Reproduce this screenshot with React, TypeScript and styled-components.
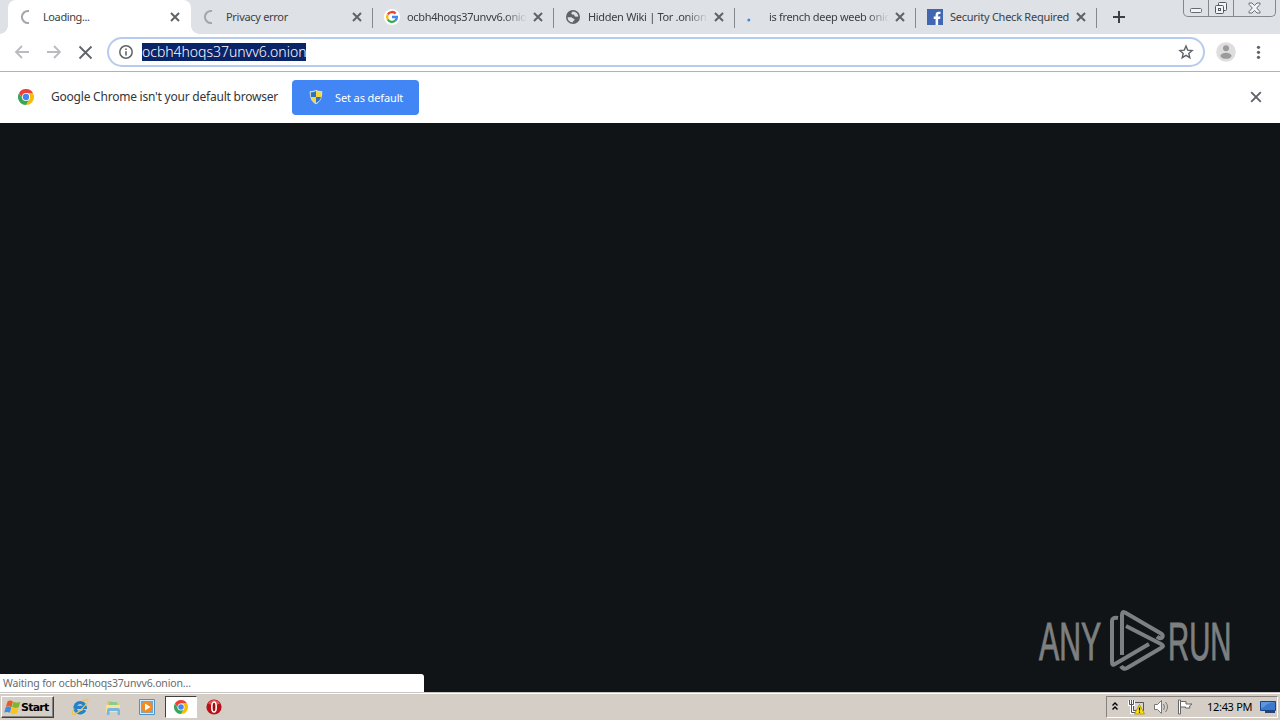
import React from 'react';
import styled, { createGlobalStyle, css } from 'styled-components';

const GlobalStyle = createGlobalStyle`
  * {
    box-sizing: border-box;
  }

  body {
    margin: 0;
    overflow: hidden;
    font-family: 'Noto Sans', 'DejaVu Sans', sans-serif;
  }

  svg {
    display: block;
    flex-shrink: 0;
  }
`;

const Screen = styled.div`
  width: 1280px;
  height: 720px;
  display: flex;
  flex-direction: column;
  background: #101417;
`;

const TabStrip = styled.div`
  height: 34px;
  display: flex;
  padding-left: 8px;
  background: #dee1e6;
  flex-shrink: 0;
`;

const TabItem = styled.div<{ $active?: boolean; $divider?: boolean }>`
  position: relative;
  width: 181px;
  height: 34px;
  padding: 0 10px 0 12px;
  display: flex;
  align-items: center;
  flex-shrink: 0;

  ${({ $divider }) =>
    $divider &&
    css`
      &::after {
        content: '';
        position: absolute;
        right: -1px;
        top: 8px;
        width: 1px;
        height: 20px;
        background: #85888d;
      }
    `}

  ${({ $active }) =>
    $active &&
    css`
      width: 183px;
      padding-right: 11px;
      background: #fff;
      border-radius: 8px 8px 0 0;

      &::before,
      &::after {
        content: '';
        position: absolute;
        bottom: 0;
        width: 8px;
        height: 8px;
      }

      &::before {
        left: -8px;
        background: radial-gradient(circle at 0 0, #dee1e6 7.5px, #fff 8px);
      }

      &::after {
        right: -8px;
        background: radial-gradient(circle at 100% 0, #dee1e6 7.5px, #fff 8px);
      }
    `}
`;

const Favicon = styled.div`
  width: 16px;
  height: 16px;
  margin-right: 7px;
  flex-shrink: 0;
`;

const TabTitle = styled.div<{ $spacing: number; $fade?: boolean }>`
  width: 120px;
  overflow: hidden;
  white-space: nowrap;
  color: #3c4043;
  font-size: 11px;
  line-height: 18px;
  letter-spacing: ${({ $spacing }) => $spacing}px;
  ${({ $fade }) =>
    $fade && 'mask-image: linear-gradient(90deg, #000 98px, transparent 120px);'}
`;

const TabClose = styled.div`
  margin-left: auto;
`;

const NewTab = styled.div`
  padding: 11px 0 0 17px;
`;

const WindowControls = styled.div`
  height: 17px;
  width: 93px;
  margin-left: auto;
  margin-right: 4px;
  display: flex;
  border: 1px solid #84888e;
  border-top: 0;
  border-radius: 0 0 5px 5px;
`;

const WindowButton = styled.div<{ $width: number }>`
  width: ${({ $width }) => $width}px;
  display: flex;
  align-items: center;
  justify-content: center;

  & + & {
    border-left: 1px solid #84888e;
  }
`;

const Toolbar = styled.div`
  height: 38px;
  display: flex;
  align-items: center;
  padding: 0 13px 1px 14px;
  border-bottom: 1px solid #b0b2b4;
  background: #fff;
  flex-shrink: 0;
`;

const NavButton = styled.div`
  width: 16px;
  margin-right: 16px;
`;

const Omnibox = styled.div`
  width: 1098px;
  height: 30px;
  margin-left: -3px;
  padding: 0 9px 0 10px;
  display: flex;
  align-items: center;
  border: 2px solid #b6cbed;
  border-radius: 15px;
  background: #fff;
`;

const Address = styled.div`
  height: 18px;
  margin-left: 9px;
  margin-right: auto;
  white-space: nowrap;
  background: #0a246a;
  color: #fff;
  font-size: 14px;
  font-weight: 300;
  line-height: 17px;
  letter-spacing: -0.02px;
`;

const Avatar = styled.div`
  margin: 0 14px 0 11px;
`;

const InfoBar = styled.div`
  height: 51px;
  padding: 0 18px;
  display: flex;
  align-items: center;
  background: #fff;
  flex-shrink: 0;

  & > svg {
    margin-bottom: 2px;
  }
`;

const InfoText = styled.div`
  width: 241px;
  margin-left: 17px;
  padding-bottom: 2px;
  white-space: nowrap;
  color: #333639;
  font-size: 12px;
  letter-spacing: -0.22px;
`;

const DefaultButton = styled.div`
  width: 127px;
  height: 35px;
  padding-left: 17px;
  padding-bottom: 1px;
  display: flex;
  align-items: center;
  gap: 12px;
  border-radius: 4px;
  background: #4285f4;
  color: #fff;
  font-size: 11px;
  letter-spacing: -0.12px;
  white-space: nowrap;
`;

const InfoClose = styled.div`
  margin-left: auto;
  padding-bottom: 2px;
`;

const Viewport = styled.div`
  position: relative;
  flex: 1;
`;

const StatusBubble = styled.div`
  position: absolute;
  left: 0;
  bottom: 0;
  width: 424px;
  height: 18px;
  padding-left: 3px;
  border-top-right-radius: 3px;
  background: #fff;
  color: #686b6e;
  font-size: 10.5px;
  line-height: 18px;
  letter-spacing: -0.15px;
`;

const Watermark = styled.div`
  position: absolute;
  left: 1036px;
  top: 484px;
`;

const Taskbar = styled.div`
  height: 28px;
  padding: 2px 2px 1px 1px;
  display: flex;
  align-items: center;
  border-top: 1px solid #c7c6c2;
  box-shadow: inset 0 1px #fff;
  background: #d5cec7;
  flex-shrink: 0;
`;

const StartButton = styled.div`
  width: 53px;
  height: 22px;
  padding-left: 2px;
  display: flex;
  align-items: center;
  border: 1px solid;
  border-color: #fff #404040 #404040 #fff;
  box-shadow: inset -1px -1px #85817c;
  color: #000;
  font-family: 'DejaVu Sans', sans-serif;
  font-size: 11px;
  font-weight: 700;
  letter-spacing: -0.75px;
`;

const QuickLaunch = styled.div`
  display: flex;
  align-items: center;
  margin-left: 9px;
`;

const LaunchItem = styled.div<{ $active?: boolean }>`
  width: ${({ $active }) => ($active ? 32 : 33.5)}px;
  height: 22px;
  margin-right: ${({ $active }) => ($active ? 1 : 0)}px;
  display: flex;
  align-items: center;
  justify-content: center;
  ${({ $active }) =>
    $active &&
    css`
      margin-left: 1px;
      border: 1px solid;
      border-color: #404040 #fff #fff #404040;
      background: #fff;
    `}
`;

const Tray = styled.div`
  width: 172px;
  height: 22px;
  margin-left: auto;
  padding: 0 1px 0 4px;
  display: flex;
  align-items: center;
  border: 1px solid;
  border-color: #85817c #fff #fff #85817c;
`;

const TrayItem = styled.div<{ $gap: number }>`
  margin-right: ${({ $gap }) => $gap}px;
`;

const Clock = styled.div`
  width: 46px;
  margin-right: 7px;
  padding-bottom: 1px;
  color: #000;
  font-size: 11px;
  letter-spacing: -0.3px;
  white-space: nowrap;
`;

const CrossIcon = ({ size = 10, stroke = 2, color = '#5f6368' }) => (
  <svg width={size} height={size} viewBox="0 0 10 10">
    <path d="M1 1l8 8M9 1l-8 8" stroke={color} strokeWidth={(stroke * 10) / size} />
  </svg>
);

const SpinnerIcon = () => (
  <svg width="16" height="16" viewBox="0 0 16 16">
    <path
      d="M9 2.1A6 6 0 1 0 9 13.9"
      fill="none"
      stroke="#a3a6ab"
      strokeWidth="2"
    />
  </svg>
);

const GoogleIcon = () => (
  <svg width="16" height="16" viewBox="0 0 16 16">
    <circle cx="8" cy="8" r="8" fill="#fff" />
    <g fill="none" strokeWidth="2.3">
      <path d="M3.8 5.5A4.9 4.9 0 0 1 11.6 4.5" stroke="#ea4335" />
      <path d="M3.8 10.5A4.9 4.9 0 0 1 3.8 5.5" stroke="#fbbc05" />
      <path d="M11.2 11.7A4.9 4.9 0 0 1 3.8 10.5" stroke="#34a853" />
      <path d="M8 8h4.9A4.9 4.9 0 0 1 11.2 11.7" stroke="#4285f4" />
    </g>
  </svg>
);

const GlobeIcon = () => (
  <svg width="16" height="16" viewBox="0 0 16 16">
    <circle cx="8" cy="8" r="7" fill="#5f6368" />
    <path
      d="M8 2.6L6.2 4l.8 1.4 2.2.4.4 1.5 1.4.5 2.400-.4C13 4.800 11 2.700 8 2.600zM2.600 8.200c1.500.2 4-.3 4.800.9.700 1 2.200.4 2.200 1.500 0 1.200-1.500 1-1.800 2.800-3 0-5.200-2.200-5.200-5.200z"
      fill="#dee1e6"
    />
  </svg>
);

const DotIcon = () => (
  <svg width="16" height="16" viewBox="0 0 16 16">
    <circle cx="2.800" cy="11" r="1.500" fill="#3c8be0" />
  </svg>
);

const FacebookIcon = () => (
  <svg width="16" height="16" viewBox="0 0 16 16">
    <path d="M0 0h16v16H0z" fill="#4267b2" />
    <path
      d="M8.6 16V9.9H6.7V7.5h1.9V5.8c0-2 1.2-3.1 3-3.1h1.9v2.2h-1.2c-1 0-1.2.5-1.2 1.2v1.4h2.3l-.3 2.4h-2V16z"
      fill="#fff"
    />
  </svg>
);

const ArrowIcon = ({ forward = false }) => (
  <svg width="16" height="16" viewBox="0 0 16 16">
    <path
      d={forward ? 'M1 8h13M8 2l6 6-6 6' : 'M15 8H2M8 2L2 8l6 6'}
      fill="none"
      stroke="#b9bbbe"
      strokeWidth="1.8"
    />
  </svg>
);

const InfoIcon = () => (
  <svg width="14" height="14" viewBox="0 0 14 14">
    <circle cx="7" cy="7" r="6.2" fill="none" stroke="#5f6368" strokeWidth="1.5" />
    <path d="M7 6.2v4.3M7 3.5V5" stroke="#5f6368" strokeWidth="1.6" />
  </svg>
);

const StarIcon = () => (
  <svg width="16" height="16" viewBox="0 0 16 16">
    <path
      d="M8 2l1.7 4.1 4.4.4-3.3 2.9 1 4.3L8 11.4l-3.8 2.3 1-4.3-3.3-2.9 4.4-.4z"
      fill="none"
      stroke="#5f6368"
      strokeWidth="1.4"
    />
  </svg>
);

const AvatarIcon = () => (
  <svg width="20" height="20" viewBox="0 0 20 20">
    <circle cx="10" cy="10" r="9.8" fill="#dedede" />
    <circle cx="10" cy="6.3" r="3" fill="#9b9b9b" />
    <ellipse cx="10" cy="13.8" rx="5.5" ry="3" fill="#9b9b9b" />
  </svg>
);

const MenuIcon = () => (
  <svg width="16" height="16" viewBox="0 0 16 16" fill="#5f6368">
    <circle cx="8.500" cy="3.300" r="1.600" />
    <circle cx="8.500" cy="8.300" r="1.600" />
    <circle cx="8.500" cy="13.300" r="1.600" />
  </svg>
);

const ChromeIcon = ({ size = 16 }) => (
  <svg width={size} height={size} viewBox="0 0 48 48">
    <path d="M3.2 12A24 24 0 0 1 44.8 12H24L14 30z" fill="#ea4335" />
    <path d="M44.8 12A24 24 0 0 1 24 48L34.4 30V18L24 12z" fill="#fbbc05" />
    <path d="M24 48A24 24 0 0 1 3.2 12L13.6 30H34.4z" fill="#34a853" />
    <circle cx="24" cy="24" r="12" fill="#fff" />
    <circle cx="24" cy="24" r="9.5" fill="#4285f4" />
  </svg>
);

const ShieldIcon = () => (
  <svg width="14" height="16" viewBox="0 0 14 16">
    <path
      d="M7 .7c2 1.2 4 1.6 6.2 1.4C13.5 8 12 12.7 7 15.3 2 12.7.5 8 .8 2.1 3 2.3 5 1.9 7 .7z"
      fill="#d9dfd0"
    />
    <path d="M7 2v6H2C1.8 6 1.8 5 1.9 3.3 4 3.3 5.5 2.9 7 2z" fill="#2d73c4" />
    <path d="M7 2v6h5c.2-2 .2-3 .1-4.7C10 3.3 8.5 2.9 7 2z" fill="#f5d63d" />
    <path d="M7 8v6C4.2 12.5 2.5 10.5 2 8z" fill="#f5d63d" />
    <path d="M7 8v6c2.8-1.5 4.5-3.5 5-6z" fill="#2d73c4" />
  </svg>
);

const RestoreIcon = () => (
  <svg width="14" height="14" viewBox="0 0 14 14" fill="#f3f4f6" stroke="#555a62">
    <rect x="4.5" y="1.5" width="8" height="8" rx="1" />
    <rect x="1.5" y="4.5" width="8" height="8" rx="1" />
    <rect x="4.5" y="7.5" width="2" height="2" />
  </svg>
);

const WindowCloseIcon = () => (
  <svg width="13" height="12" viewBox="0 0 13 12">
    <path
      d="M1 1h3l2.5 2.6L9 1h3v1.3L8.7 6l3.3 3.7V11H9L6.5 8.4 4 11H1V9.7L4.3 6 1 2.3z"
      fill="#f3f4f6"
      stroke="#6a6e75"
    />
  </svg>
);

const WindowsFlag = () => (
  <svg width="17" height="17" viewBox="0 0 16 16">
    <path d="M3.4 2.2c2-1.200 3.500-.8 5 .1L7.100 7.500C5.300 6.500 3.700 6.500 1.800 7.300z" fill="#ec5a24" />
    <path d="M8.800 2.600c2 1 4 1 6.500-.1l-1.500 5.200c-2 .9-4.200.9-6.200-.1z" fill="#7db72f" />
    <path d="M1.600 7.700c2-.9 3.700-.8 5.300.2l-1.300 5c-1.800-1-3.400-1-5.400-.2z" fill="#3d8ede" />
    <path d="M7.400 8.100c2 1 4.200 1 6.200.1L12.200 13.500c-2 .9-4 .8-6.100-.2z" fill="#fcc419" />
  </svg>
);

const ExplorerIcon = () => (
  <svg width="18" height="18" viewBox="0 0 18 18" fill="none">
    <path d="M13.800 12A5.200 5.200 0 1 1 14.300 9.300H5" stroke="#2382cf" strokeWidth="3.200" />
    <path
      d="M11.500 3.200C15.500.600 18 1.300 16.600 4.300M3.300 10.500C.6 14.500.8 17 3.500 16.100 7 14.900 13 9.500 16 5"
      stroke="#edc44c"
      strokeWidth="1.300"
    />
  </svg>
);

const FolderIcon = () => (
  <svg width="17" height="17" viewBox="0 0 17 17">
    <path d="M2 2h5l1 2h6v8H2z" fill="#e7c560" />
    <path d="M4 3h8v5H4z" fill="#8bc98c" />
    <path d="M1 6h14v7H1z" fill="#f7e39a" />
    <path d="M2 16v-5q0-2 2-2h9q2 0 2 2v5h-2.5v-4h-8v4z" fill="#75b7de" />
  </svg>
);

const MediaIcon = () => (
  <svg width="16" height="16" viewBox="0 0 16 16">
    <path d="M.5.5h15v15H.5z" fill="#d6e9f5" stroke="#4d94c5" />
    <path d="M2 2h12v12H2z" fill="#70aad3" />
    <circle cx="8" cy="8" r="5.8" fill="#f58b1f" />
    <path d="M6 4.5L11.5 8 6 11.5z" fill="#fff" />
  </svg>
);

const OperaIcon = () => (
  <svg width="16" height="16" viewBox="0 0 16 16">
    <circle cx="8" cy="8" r="7.6" fill="#b81218" />
    <path d="M2 4.500a7 7 0 0 1 12 0q-6 3-12 0" fill="#df5450" />
    <ellipse cx="8" cy="8" rx="2.200" ry="5" fill="#9c0d12" stroke="#fff" strokeWidth="1.600" />
  </svg>
);

const ChevronsIcon = () => (
  <svg width="8" height="10" viewBox="0 0 8 10">
    <path d="M1.500 3.500L4 1l2.500 2.500M1.500 7.500L4 5l2.500 2.500" fill="none" stroke="#000" strokeWidth="1.400" />
  </svg>
);

const NetworkIcon = () => (
  <svg width="17" height="16" viewBox="0 0 17 16">
    <path d="M5.5 3.5h10v8h-10z" fill="#d7d7d7" stroke="#555" />
    <path d="M1.5 1.5v4h4v-4M3.5 5.5v8h4M3.5 1v4" fill="none" stroke="#fff" strokeWidth="3" />
    <path d="M1.5 1v4.5h4V1M3.5 1v12.5h4" fill="none" stroke="#555" />
    <path d="M11.5 5.5l5 9.5h-10z" fill="#ffe11a" stroke="#b79b00" />
    <path d="M11.5 8.5v3M11.5 12.5v1.3" stroke="#000" strokeWidth="1.2" />
  </svg>
);

const SpeakerIcon = () => (
  <svg width="17" height="16" viewBox="0 0 17 16">
    <path d="M1.5 5.5h3l4-4v13l-4-4h-3z" fill="#fff" stroke="#777" />
    <path d="M10.5 5q2 3 0 6M12.5 3q4 5 0 10" fill="none" stroke="#777" />
  </svg>
);

const FlagIcon = () => (
  <svg width="17" height="16" viewBox="0 0 17 16">
    <path d="M3 2.5h6V5h6l-2.5 2 .5 2H8.5V8H3z" fill="#fff" stroke="#666" />
    <path d="M1.5 1h2v14h-2z" fill="#fff" stroke="#666" />
  </svg>
);

const MonitorIcon = () => (
  <svg width="16" height="14" viewBox="0 0 16 14">
    <path d="M.5 1.500h15v9H.5z" fill="#3c79cb" stroke="#1b4388" />
    <path d="M1 2h14Q7 3 4 7l-3 1z" fill="#5c98df" />
    <path d="M5 11h10v2H5z" fill="#29456f" />
  </svg>
);

const AnyRunLogo = () => (
  <svg width="200" height="68" viewBox="0 0 200 68">
    <g
      fill="#7d7f80"
      stroke="#7d7f80"
      strokeWidth="1"
      fontFamily="'Liberation Sans', Arial, sans-serif"
      fontSize="53"
    >
      <text transform="translate(3 52.500) scale(.58 1)" textLength="107" lengthAdjust="spacingAndGlyphs">
        ANY
      </text>
      <text transform="translate(132 52.500) scale(.52 1)" textLength="122" lengthAdjust="spacingAndGlyphs">
        RUN
      </text>
    </g>
    <g fill="none" stroke="#7d7f80" strokeWidth="4" strokeLinejoin="round">
      <path d="M82 11q-6-1-6 3V55q0 4 3 2L113 37" />
      <path d="M86 48V8q0-4 3-2.500L125 26.500q3 2 1 4t-5-1" />
      <path d="M90 19L125 37Q129 39 125 41L91 61Q87 63 85 59" />
    </g>
  </svg>
);

const tabs = [
  { title: 'Loading...', icon: <SpinnerIcon />, spacing: -0.4, active: true },
  { title: 'Privacy error', icon: <SpinnerIcon />, spacing: -0.3, divider: true },
  { title: 'ocbh4hoqs37unvv6.onion', icon: <GoogleIcon />, spacing: -0.34, divider: true, fade: true },
  { title: 'Hidden Wiki | Tor .onion', icon: <GlobeIcon />, spacing: -0.32, divider: true, fade: true },
  { title: 'is french deep weeb onion', icon: <DotIcon />, spacing: -0.32, divider: true, fade: true },
  { title: 'Security Check Required', icon: <FacebookIcon />, spacing: -0.25, divider: true },
];

const App = () => {
  return (
    <>
      <GlobalStyle />
      <Screen>
        <TabStrip>
          {tabs.map((tab) => (
            <TabItem key={tab.title} $active={tab.active} $divider={tab.divider}>
              <Favicon>{tab.icon}</Favicon>
              <TabTitle $spacing={tab.spacing} $fade={tab.fade}>
                {tab.title}
              </TabTitle>
              <TabClose>
                <CrossIcon />
              </TabClose>
            </TabItem>
          ))}
          <NewTab>
            <svg width="12" height="12" viewBox="0 0 12 12">
              <path d="M6 0v12M0 6h12" stroke="#3c4043" strokeWidth="2" />
            </svg>
          </NewTab>
          <WindowControls>
            <WindowButton $width={24}>
              <svg width="12" height="14" viewBox="0 0 12 14">
                <rect x=".5" y="7.5" width="11" height="4" rx="1" fill="#f3f4f6" stroke="#666a71" />
              </svg>
            </WindowButton>
            <WindowButton $width={25}>
              <RestoreIcon />
            </WindowButton>
            <WindowButton $width={42}>
              <WindowCloseIcon />
            </WindowButton>
          </WindowControls>
        </TabStrip>
        <Toolbar>
          <NavButton>
            <ArrowIcon />
          </NavButton>
          <NavButton>
            <ArrowIcon forward />
          </NavButton>
          <NavButton>
            <CrossIcon size={15} stroke={1.8} />
          </NavButton>
          <Omnibox>
            <InfoIcon />
            <Address>ocbh4hoqs37unvv6.onion</Address>
            <StarIcon />
          </Omnibox>
          <Avatar>
            <AvatarIcon />
          </Avatar>
          <MenuIcon />
        </Toolbar>
        <InfoBar>
          <ChromeIcon />
          <InfoText>Google Chrome isn't your default browser</InfoText>
          <DefaultButton>
            <ShieldIcon />
            Set as default
          </DefaultButton>
          <InfoClose>
            <CrossIcon size={12} stroke={1.9} />
          </InfoClose>
        </InfoBar>
        <Viewport>
          <Watermark>
            <AnyRunLogo />
          </Watermark>
          <StatusBubble>Waiting for ocbh4hoqs37unvv6.onion...</StatusBubble>
        </Viewport>
        <Taskbar>
          <StartButton>
            <WindowsFlag />
            Start
          </StartButton>
          <QuickLaunch>
            <LaunchItem>
              <ExplorerIcon />
            </LaunchItem>
            <LaunchItem>
              <FolderIcon />
            </LaunchItem>
            <LaunchItem>
              <MediaIcon />
            </LaunchItem>
            <LaunchItem $active>
              <ChromeIcon size={14} />
            </LaunchItem>
            <LaunchItem>
              <OperaIcon />
            </LaunchItem>
          </QuickLaunch>
          <Tray>
            <TrayItem $gap={9}>
              <ChevronsIcon />
            </TrayItem>
            <TrayItem $gap={8}>
              <NetworkIcon />
            </TrayItem>
            <TrayItem $gap={7}>
              <SpeakerIcon />
            </TrayItem>
            <TrayItem $gap={13}>
              <FlagIcon />
            </TrayItem>
            <Clock>12:43 PM</Clock>
            <MonitorIcon />
          </Tray>
        </Taskbar>
      </Screen>
    </>
  );
};

export default App;
